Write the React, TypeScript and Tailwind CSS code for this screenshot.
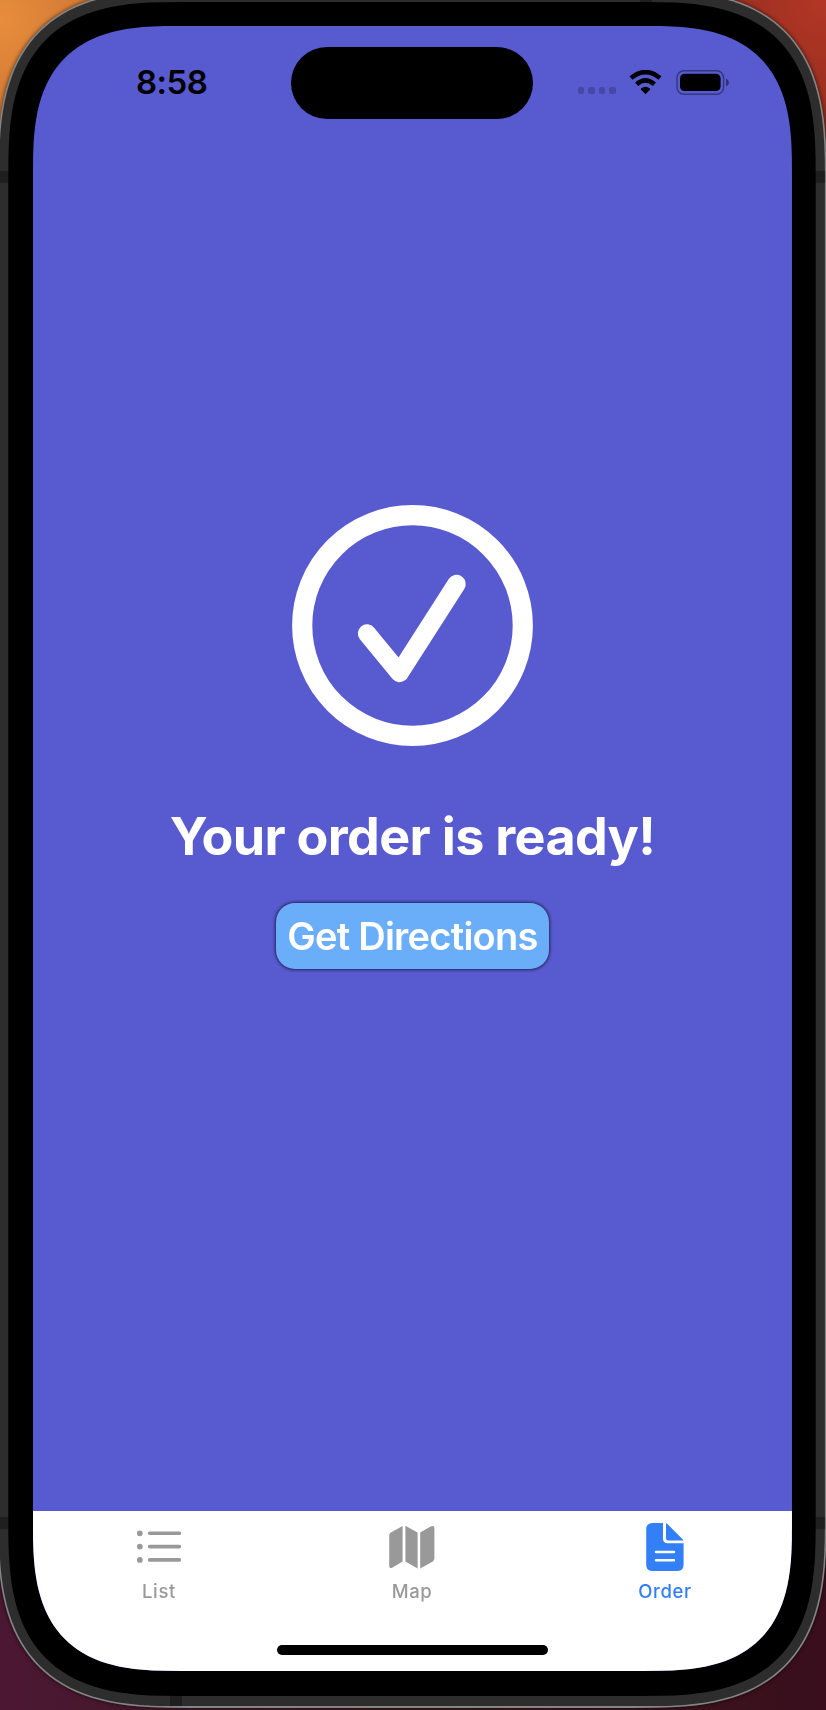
import type { ReactNode } from "react";

const CORNER_STEPS = 32;
const CORNER_EXPONENT = 2.89;

/** Rounded rectangle whose corners follow a superellipse, as on iOS hardware. */
function continuousRect(w: number, h: number, r: number): string {
  const reach = r * 1.36;
  const arc = Array.from({ length: CORNER_STEPS + 1 }, (_, i) => {
    const t = (i / CORNER_STEPS) * (Math.PI / 2);
    return {
      x: reach * (1 - Math.pow(Math.abs(Math.cos(t)), 2 / CORNER_EXPONENT)),
      y: reach * (1 - Math.pow(Math.abs(Math.sin(t)), 2 / CORNER_EXPONENT)),
    };
  });
  const reversed = [...arc].reverse();
  const points = [
    ...arc.map((p) => [p.x, p.y]),
    ...reversed.map((p) => [w - p.x, p.y]),
    ...arc.map((p) => [w - p.x, h - p.y]),
    ...reversed.map((p) => [p.x, h - p.y]),
  ];
  return `M${points.map(([x, y]) => `${x.toFixed(2)} ${y.toFixed(2)}`).join("L")}Z`;
}

type ShellProps = {
  w: number;
  h: number;
  r: number;
  className: string;
  children: ReactNode;
};

function Shell({ w, h, r, className, children }: ShellProps) {
  return (
    <div
      className={`shrink-0 ${className}`}
      style={{ width: w, height: h, clipPath: `path("${continuousRect(w, h, r)}")` }}
    >
      {children}
    </div>
  );
}

function WifiIcon() {
  return (
    <svg className="ml-[13.5px] h-[25px] w-[33px]" viewBox="0 0 33 25">
      <path d="M16.5 24.3 11.9 19.4Q11.6 18.9 12.1 18.5 16.5 15 20.9 18.5 21.4 18.9 21.1 19.4Z" />
      <path d="M7.6 14.2Q16.5 6.4 25.4 14.2" fill="none" stroke="#000" strokeWidth="4.6" />
      <path d="M2 8Q16.5-3.8 31 8" fill="none" stroke="#000" strokeWidth="4.6" />
    </svg>
  );
}

function BatteryIcon() {
  return (
    <svg className="ml-[14px] h-[25px] w-[53px]" viewBox="0 0 53 25">
      <rect x="1" y="0.8" width="46.6" height="23.4" rx="7" fill="none" stroke="#000" strokeOpacity="0.4" strokeWidth="1.4" />
      <rect x="4" y="3.8" width="40.6" height="17.2" rx="4.6" />
      <path d="M50 8.6Q53 10 53 12.4T50 16.2Z" fillOpacity="0.45" />
    </svg>
  );
}

function StatusBar() {
  return (
    <header className="grid h-[72px] grid-cols-[258.5px_242px_258.5px] items-center">
      <span className="pl-[103px] text-[33px] leading-none font-semibold tracking-[-0.5px] text-black">8:58</span>
      <div className="h-[72px] rounded-full bg-black" />
      <div className="flex items-center pl-[44.5px]">
        <div className="mt-[15px] flex gap-[4px]">
          <i className="h-[6.4px] w-[6.4px] rounded-[2px] bg-black/20" />
          <i className="h-[6.4px] w-[6.4px] rounded-[2px] bg-black/20" />
          <i className="h-[6.4px] w-[6.4px] rounded-[2px] bg-black/20" />
          <i className="h-[6.4px] w-[6.4px] rounded-[2px] bg-black/20" />
        </div>
        <WifiIcon />
        <BatteryIcon />
      </div>
    </header>
  );
}

function CheckCircle() {
  return (
    <svg className="h-[241px] w-[241px]" viewBox="0 0 241 241" fill="none" stroke="#fff">
      <circle cx="120.5" cy="120.5" r="110.3" strokeWidth="20.2" />
      <path d="M75 128.5 107.5 168 164.5 79" strokeWidth="18.4" strokeLinecap="round" strokeLinejoin="round" />
    </svg>
  );
}

function ListIcon() {
  return (
    <svg className="h-[48px] w-[44px]" viewBox="0 0 44 48" fill="#999">
      <circle cx="2.8" cy="10.3" r="2.9" />
      <circle cx="2.8" cy="23.6" r="2.9" />
      <circle cx="2.8" cy="36.9" r="2.9" />
      <rect x="10.8" y="8.5" width="33.4" height="3.6" rx="1.8" />
      <rect x="10.8" y="21.8" width="33.4" height="3.6" rx="1.8" />
      <rect x="10.8" y="35.1" width="33.4" height="3.6" rx="1.8" />
    </svg>
  );
}

function MapIcon() {
  return (
    <svg className="h-[48px] w-[46px]" viewBox="0 0 46 48" fill="#999">
      <path d="M.2 12.6Q.2 10.6 1.9 9.6L13.6 3V38.6L3.6 44.4Q.2 46 .2 43Z" />
      <path d="M16.4 2.8 28.6 9.6V45.6L16.4 38.6Z" />
      <path d="M31.2 9.6 41.6 3.6Q45.4 2 45.4 5.4V35.6Q45.4 37.4 43.8 38.4L31.2 45.6Z" />
    </svg>
  );
}

function OrderIcon() {
  return (
    <svg className="h-[48px] w-[38px]" viewBox="0 0 38 48" fill="#327ff6">
      <path d="M6.5 0H17V15.5Q17 20.2 21.7 20.2H37.6V41.5Q37.6 48 31.1 48H6.5Q.2 48 .2 41.5V6.5Q.2 0 6.5 0Z" />
      <path d="M20 .3Q20.8 .4 21.6 1.2L36.4 16Q37.2 16.8 37.3 17.6H22Q20 17.6 20 15.6Z" />
      <path d="M10 29H28M10 37.2H28" stroke="#fff" strokeWidth="2.4" strokeLinecap="round" />
    </svg>
  );
}

function Tab({ label, icon, active }: { label: string; icon: ReactNode; active?: boolean }) {
  return (
    <div className={`flex flex-col items-center ${active ? "text-[#327ff6]" : "text-[#999999]"}`}>
      {icon}
      <span className="mt-[9.5px] mr-[1px] text-[18.5px] leading-[22px] font-medium tracking-[0.6px]">{label}</span>
    </div>
  );
}

function TabBar() {
  return (
    <nav className="flex h-[160px] flex-col items-center bg-white pt-[12px]">
      <div className="grid h-[122.5px] w-full grid-cols-3">
        <Tab label="List" icon={<ListIcon />} />
        <Tab label="Map" icon={<MapIcon />} />
        <Tab label="Order" icon={<OrderIcon />} active />
      </div>
      <div className="h-[10px] w-[270.5px] rounded-full bg-black" />
    </nav>
  );
}

export default function App() {
  return (
    <div className="h-[1710px] w-[826px] overflow-hidden bg-[radial-gradient(circle_at_0_20px,#e88d3c_0,#bf6a30_160px,transparent_161px),radial-gradient(circle_at_100%_0,#b33625_0,#8c2c1e_160px,transparent_161px),linear-gradient(to_right,#4c1733,#3a1c1e_50%,#3a0e1d)] font-['Inter','Liberation_Sans',sans-serif]">
      <div className="-mt-[10.5px] -ml-[2.5px] flex drop-shadow-[0_0_2px_rgba(0,0,0,0.7)]">
        <Shell w={829} h={1718.5} r={142} className="bg-[#858585] p-[1.6px]">
          <Shell w={825.8} h={1715.3} r={140.5} className="bg-[#2d2d2d]">
            <div className="relative h-full pt-[10.9px] pl-[9.2px]">
              <div className="absolute top-0 left-[641px] h-[12px] w-[12px] bg-[#1f1f1f]" />
              <div className="absolute top-[180px] left-0 h-[12px] w-full bg-[#1f1f1f]" />
              <div className="absolute bottom-[177.4px] left-0 h-[12px] w-full bg-[#1f1f1f]" />
              <div className="absolute bottom-0 left-[171px] h-[14px] w-[12px] bg-[#1f1f1f]" />
              <Shell w={807.4} h={1694} r={130} className="relative bg-black pt-[24px] pl-[24.7px]">
                <Shell w={759} h={1645} r={110} className="flex flex-col bg-[#585acf] pt-[21px]">
                  <StatusBar />
                  <main className="flex flex-1 flex-col items-center pt-[386.5px]">
                    <CheckCircle />
                    <h1 className="mt-[58.5px] text-[52px] leading-[64px] font-bold tracking-[-0.65px] whitespace-nowrap text-white">
                      Your order is ready!
                    </h1>
                    <button className="mt-[34px] flex h-[66px] w-[273px] items-center justify-center rounded-[19px] bg-[#6aadf9] text-[38px] leading-none font-semibold tracking-[-0.75px] whitespace-nowrap text-white shadow-[0_0_3px_1px_rgba(20,20,50,0.75)]">
                      Get Directions
                    </button>
                  </main>
                  <TabBar />
                </Shell>
              </Shell>
            </div>
          </Shell>
        </Shell>
      </div>
    </div>
  );
}
